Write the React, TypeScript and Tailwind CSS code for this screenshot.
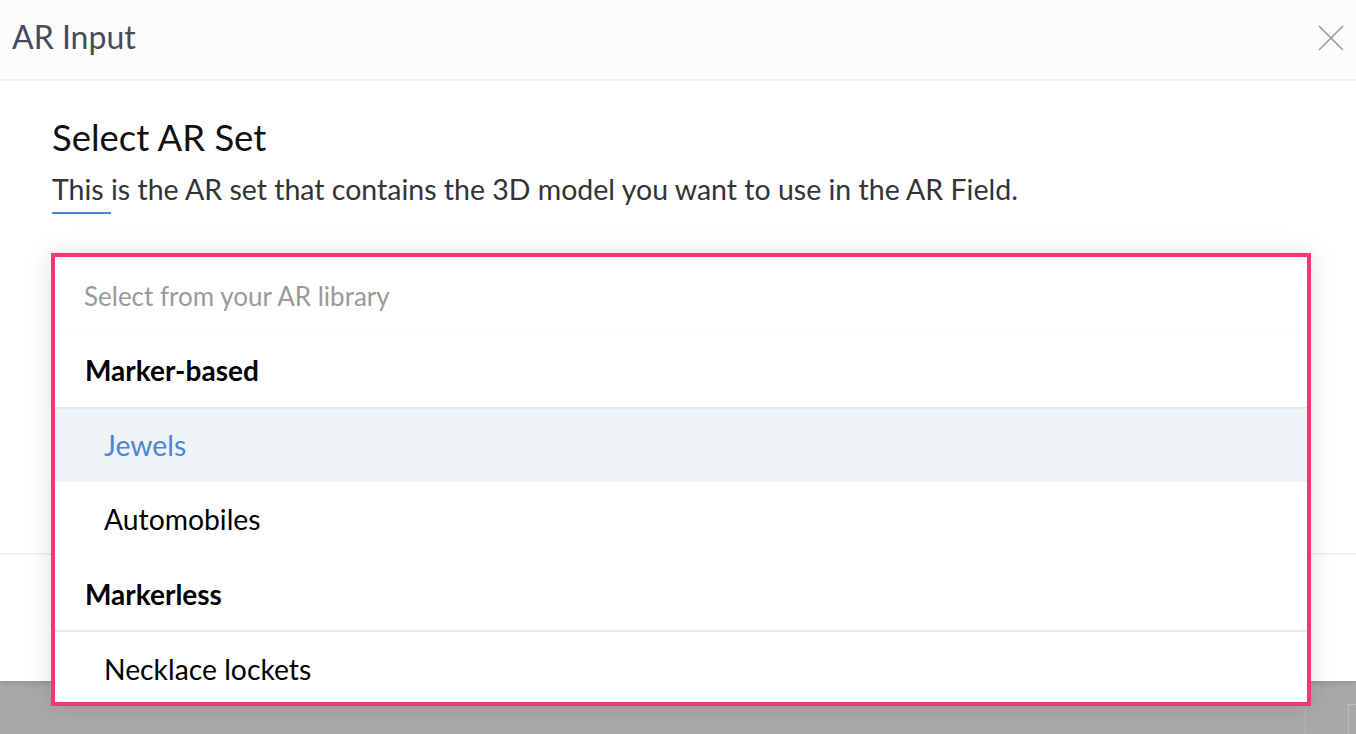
export default function App() {
  const font = { fontFamily: 'Lato, "Open Sans", sans-serif' }

  return (
    <div
      className="relative h-[734px] w-full overflow-hidden bg-[#a9a9a9]"
      style={font}
    >
      {/* 背景の何か */}
      <div className="absolute left-[1305px] top-[681px] h-[53px] w-px bg-[#b4b4b4]" />
      <div className="absolute left-[1348px] top-[704px] h-[40px] w-[20px] border border-[#bdbdbd]" />

      {/* モーダル */}
      <div className="flex h-[681px] flex-col bg-white shadow-[0_2px_6px_rgba(0,0,0,0.15)]">
        <div className="flex h-[81px] shrink-0 items-center justify-between border-b-2 border-[#f0f0f0] bg-[#fcfcfc] pl-3 pr-3">
          <span className="pb-[6px] text-[32px] text-[#454b5c]">AR Input</span>
          <svg
            width="26"
            height="26"
            viewBox="0 0 26 26"
            className="mb-[4px]"
          >
            <path
              d="M1 1 L25 25 M25 1 L1 25"
              stroke="#9a9a9a"
              strokeWidth="1.6"
              fill="none"
            />
          </svg>
        </div>

        <div className="h-[474px] shrink-0 border-b-2 border-[#f0f0f0] px-[52px] pt-[34px]">
          <h2 className="text-[36.5px] leading-[44px] text-[#111]">Select AR Set</h2>
          <p className="mt-[13px] text-[28.5px] leading-[34px] text-[#333]">
            This is the AR set that contains the 3D model you want to use in the AR Field.
          </p>
          <div className="mt-[6px] h-[2px] w-[59px] bg-[#4a86d8]" />
        </div>
        <div className="flex-1" />
      </div>

      {/* ドロップダウン */}
      <div className="absolute left-[51px] top-[253px] w-[1260px] border-[4px] border-[#ec3b74] bg-white shadow-[0_0_24px_rgba(0,0,0,0.12)]">
        <div className="flex h-[75px] items-center pl-[29px] pt-[3px] text-[26px] text-[#9a9a9a] shadow-[0_4px_6px_-4px_rgba(0,0,0,0.04)]">
          Select from your AR library
        </div>
        <div className="flex h-[77px] items-center border-b-2 border-[#e9e9e9] pl-[30px] text-[28px] font-bold text-black">
          Marker-based
        </div>
        <div className="flex h-[73px] items-center bg-[#eff2f7] pl-[49px] text-[28.3px] text-[#4a85d4]">
          Jewels
        </div>
        <div className="flex h-[75px] items-center pl-[49px] text-[28.3px] text-black">
          Automobiles
        </div>
        <div className="flex h-[75px] items-center border-b-2 border-[#e9e9e9] pl-[30px] text-[28px] font-bold text-black">
          Markerless
        </div>
        <div className="flex h-[70px] items-center pl-[49px] pt-[4px] text-[28.3px] text-black">
          Necklace lockets
        </div>
      </div>
    </div>
  )
}
